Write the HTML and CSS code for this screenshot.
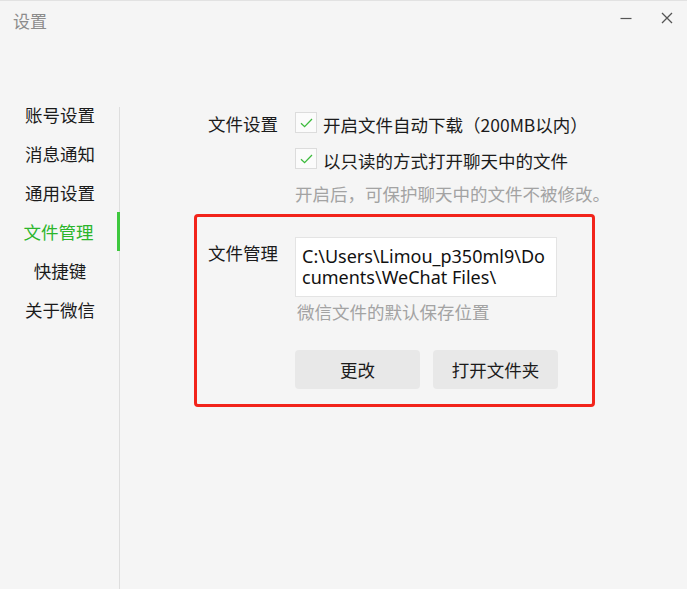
FILE: index.html
```html
<!DOCTYPE html>
<html lang="zh-CN">
<head>
<meta charset="utf-8">
<title>设置</title>
<link rel="stylesheet" href="styles.css">
</head>
<body>
<div class="window">
  <header class="titlebar">
    <div class="title">设置</div>
    <div class="controls">
      <svg class="ctl" width="12" height="12" viewBox="0 0 12 12"><path d="M0.5 6.5h11" stroke="#555" stroke-width="1.2"/></svg>
      <svg class="ctl" width="12" height="12" viewBox="0 0 12 12"><path d="M1 1l10 10M11 1L1 11" stroke="#555" stroke-width="1.3"/></svg>
    </div>
  </header>
  <div class="body">
    <nav class="sidebar">
      <div class="nav-item">账号设置</div>
      <div class="nav-item">消息通知</div>
      <div class="nav-item">通用设置</div>
      <div class="nav-item active">文件管理</div>
      <div class="nav-item">快捷键</div>
      <div class="nav-item">关于微信</div>
    </nav>
    <main class="main">
      <section class="section plain">
        <div class="label">文件设置</div>
        <div class="options">
          <div class="option">
            <span class="checkbox"><svg width="13" height="10" viewBox="0 0 13 10"><path d="M1 5.2l3.6 3.4L12 1" fill="none" stroke="#3dbb3d" stroke-width="1.3"/></svg></span>
            <span>开启文件自动下载（200MB以内）</span>
          </div>
          <div class="option">
            <span class="checkbox"><svg width="13" height="10" viewBox="0 0 13 10"><path d="M1 5.2l3.6 3.4L12 1" fill="none" stroke="#3dbb3d" stroke-width="1.3"/></svg></span>
            <span>以只读的方式打开聊天中的文件</span>
          </div>
          <div class="hint">开启后，可保护聊天中的文件不被修改。</div>
        </div>
      </section>
      <section class="section boxed">
        <div class="label label-tall">文件管理</div>
        <div class="options">
          <div class="path">C:\Users\Limou_p350ml9\Documents\WeChat Files\</div>
          <div class="hint hint-path">微信文件的默认保存位置</div>
          <div class="buttons">
            <button class="btn">更改</button>
            <button class="btn">打开文件夹</button>
          </div>
        </div>
      </section>
    </main>
  </div>
</div>
</body>
</html>
```
FILE: styles.css
```css
* { box-sizing: border-box; }
html, body {
  margin: 0;
  padding: 0;
  background: #f5f5f5;
}
body {
  width: 687px;
  height: 589px;
  overflow: hidden;
  font-family: "Noto Sans", "Noto Sans CJK SC", sans-serif;
  color: #1b1b1b;
  font-size: 17.5px;
}
.window {
  height: 589px;
  display: flex;
  flex-direction: column;
  border-top: 1px solid #e2e2e2;
}
.titlebar {
  height: 106px;
  flex: none;
  display: flex;
  justify-content: space-between;
  align-items: flex-start;
  padding: 7px 14px 0 13px;
}
.title {
  font-family: "Noto Sans CJK SC", sans-serif;
  font-size: 17px;
  line-height: 26px;
  color: #8c8c8c;
}
.controls {
  display: flex;
  gap: 29px;
  padding-top: 4px;
}
.ctl { display: block; }
.body {
  flex: 1;
  display: flex;
}
.sidebar {
  width: 120px;
  flex: none;
  border-right: 1px solid #dedede;
  padding-top: 2px;
}
.nav-item {
  height: 39px;
  line-height: 39px;
  text-align: center;
  font-family: "Noto Sans CJK SC", sans-serif;
  font-size: 17.5px;
  color: #1b1b1b;
  margin-right: -1px;
}
.nav-item:first-child { margin-top: -14px; }
.nav-item.active {
  color: #2bb52b;
  border-right: 3px solid #3ec83e;
}
.main {
  flex: 1;
  padding-left: 74px;
}
.section {
  display: grid;
  grid-template-columns: 87px auto;
  font-family: "Noto Sans CJK SC", sans-serif;
}
.plain {
  padding-left: 14px;
  margin-top: -1px;
}
.label {
  line-height: 36px;
  font-size: 17.5px;
}
.option {
  height: 36px;
  display: flex;
  align-items: center;
  gap: 6px;
  white-space: nowrap;
}
.checkbox {
  width: 22px;
  height: 21px;
  flex: none;
  background: #fbfbfb;
  border: 1px solid #dcdcdc;
  display: flex;
  align-items: center;
  justify-content: center;
  margin-top: -3px;
}
.hint {
  line-height: 32px;
  color: #a3a3a3;
  white-space: nowrap;
}
.boxed {
  margin-top: 4px;
  width: 401px;
  border: 3px solid #f2241b;
  border-radius: 4px;
  padding: 20px 0 15px 11px;
}
.label-tall { line-height: 32px; }
.path {
  width: 262px;
  height: 60px;
  background: #ffffff;
  border: 1px solid #e4e4e4;
  padding: 8px 4px 8px 6px;
  font-family: "Noto Sans", sans-serif;
  font-size: 18px;
  line-height: 21px;
  word-break: break-all;
  color: #111;
}
.hint-path {
  line-height: 30px;
  padding-left: 2px;
}
.buttons {
  margin-top: 23px;
  display: flex;
  gap: 13px;
}
.btn {
  width: 125px;
  height: 39px;
  border: none;
  border-radius: 4px;
  background: #e8e8e8;
  font-family: "Noto Sans CJK SC", sans-serif;
  font-size: 17.5px;
  color: #1b1b1b;
  padding: 0;
}
```
